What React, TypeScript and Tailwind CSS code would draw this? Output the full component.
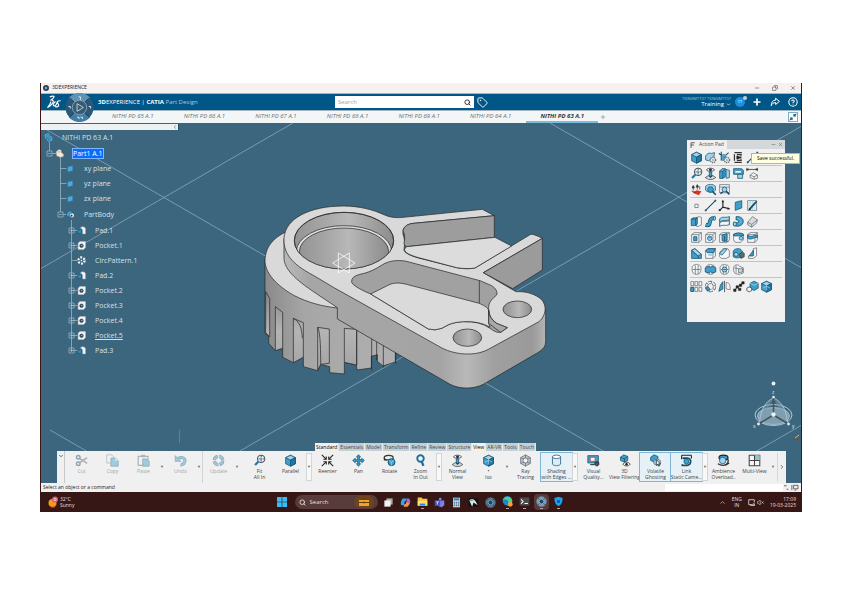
import type { ReactNode } from 'react';
import { ChevronDown, ChevronLeft, ChevronRight, ChevronUp, CircleHelp, Copy, Minus, Plus, Search, Tag, VolumeX, X } from 'lucide-react';
import { clsx } from 'clsx';

const documents = ['65', '66', '67', '68', '69', '64', '63'];

const ribbonTabs = ['Standard', 'Essentials', 'Model', 'Transform', 'Refine', 'Review', 'Structure', 'View', 'AR-VR', 'Tools', 'Touch'];

type Command = {
  label: string[];
  icon: string;
  menu?: 'plain' | 'boxed';
  gap?: boolean;
  disabled?: boolean;
  active?: boolean;
};

const commands: Command[] = [
  { label: ['Cut'], icon: 'cut', disabled: true },
  { label: ['Copy'], icon: 'copy', disabled: true },
  { label: ['Paste'], icon: 'paste', disabled: true, menu: 'plain' },
  { label: ['Undo'], icon: 'undo', disabled: true, menu: 'plain' },
  { label: ['Update'], icon: 'update', disabled: true, menu: 'plain', gap: true },
  { label: ['Fit', 'All In'], icon: 'fit' },
  { label: ['Parallel'], icon: 'cube', menu: 'boxed' },
  { label: ['Reenter'], icon: 'recenter' },
  { label: ['Pan'], icon: 'pan' },
  { label: ['Rotate'], icon: 'rotate' },
  { label: ['Zoom', 'In Out'], icon: 'zoom', menu: 'boxed' },
  { label: ['Normal', 'View'], icon: 'normal' },
  { label: ['•', 'Iso'], icon: 'iso', menu: 'plain' },
  { label: ['Ray', 'Tracing'], icon: 'ray' },
  { label: ['Shading', 'with Edges ...'], icon: 'cylinder', active: true, menu: 'boxed' },
  { label: ['Visual', 'Quality...'], icon: 'quality' },
  { label: ['3D', 'View Filtering'], icon: 'filter' },
  { label: ['Volatile', 'Ghosting'], icon: 'ghost', active: true },
  { label: ['Link', 'Static Came...'], icon: 'link', active: true, menu: 'boxed' },
  { label: ['Ambience', 'Overload..'], icon: 'ambience' },
  { label: ['Multi-View'], icon: 'multi', menu: 'plain' },
];

const padRows = [
  ['cube', 'sheetGear', 'axisGear', 'exit', 'line'],
  ['fit', 'normal', 'section', 'layers', 'measure'],
  ['material', 'zoomBody', 'zoomSheet'],
  ['point', 'line', 'axis', 'plane', 'sketch'],
  ['pad', 'rib', 'loft', 'shaft', 'sheet'],
  ['pocket', 'hole', 'shell', 'groove', 'slot'],
  ['draft', 'thick', 'chamfer', 'fillet', 'stiffener'],
  ['boolAdd', 'boolRemove', 'boolCut', 'boolJoin'],
  ['pattern', 'circPattern', 'mirror', 'points', 'scale', 'iso'],
];

const B = '#3f9fcb';
const L = '#9fd4ec';
const D = '#164e6b';
const G = '#636b70';
const W = '#f4f6f7';

const cubeShape = (
  <>
    <path d="M2 4.5 8 1.5l6 3v7.5l-6 3-6-3z" fill={B} stroke={D} />
    <path d="M2 4.5 8 1.5l6 3-6 3z" fill={L} stroke={D} />
    <path d="M8 7.5V15l6-3V4.500z" fill="#2377a3" stroke={D} />
  </>
);

const box = (
  <>
    <path d="M2 4.500 5 2h9v9l-3 3H2z" fill={W} stroke={G} />
    <path d="M2 4.500h9V14M11 4.500 14 2" stroke={G} />
  </>
);

const gear = (
  <g>
    <circle cx="11" cy="11" r="3.200" fill={W} stroke={G} strokeDasharray="1.500 .8" strokeWidth="1.800" />
    <circle cx="11" cy="11" r="1" fill={G} />
  </g>
);

const lobes = (
  <path d="M5 2.500c2-1 4-1 5.500 0 2 0 3 1.500 3 3.500s0 5-1.500 6.500c-2 2-6 2-8 0C2.500 11 2.500 8 2.500 6S3.500 3 5 2.500zM6.500 3v10.500M10 3v10.500M3 8h10" />
);

const icons: Record<string, ReactNode> = {
  cube: cubeShape,
  iso: (
    <>
      {cubeShape}
      <path d="M8 3v10M3.500 10l4.500-2.500L12.500 10" stroke={L} />
    </>
  ),
  sheetGear: (
    <>
      <path d="M2 6c2-3 4-4 7-3l4-1-1 6-6 4-4-1z" fill={L} stroke={D} />
      {gear}
    </>
  ),
  axisGear: (
    <>
      <path d="M4 1v10h9M4 5h6l3-3M1 3l3 2" stroke={D} strokeWidth="1.300" />
      <path d="M5 6h5v4H5z" fill={B} />
      {gear}
    </>
  ),
  exit: (
    <>
      <path d="M3 2h9M3 14h9M3 4v8M6 4.500h6M6 11.500h6" stroke="#333" strokeWidth="1.500" />
      <path d="M6 6l5 2-5 2zM11 5v6" fill="#222" stroke="#222" />
    </>
  ),
  line: (
    <>
      <path d="M2 14 14 2" stroke={D} strokeWidth="1.400" />
      <path d="M1 13h2v2H1zM13 1h2v2h-2z" fill={D} />
    </>
  ),
  point: <path d="M6 6.500h4v4H6z" fill={W} stroke={G} />,
  fit: (
    <>
      <circle cx="10" cy="6" r="4.600" fill={W} stroke="#39444b" strokeWidth="1.200" />
      <path d="m6.500 9.500-4 4" stroke="#1f7aa8" strokeWidth="2.800" />
      <path d="m10 2.500 1.200 1.500H8.800zM10 9.500 8.800 8h2.400zM6.500 6 8 4.800v2.400zM13.500 6 12 7.200V4.800z" fill="#222" />
      <path d="M8.800 5h2.400v2.200H8.800z" fill={B} />
    </>
  ),
  normal: (
    <>
      <path d="M3 3.500C5.500.8 10.500.8 13 3.500c-2.500 2.600-7.500 2.600-10 0z" fill={W} stroke="#222" />
      <circle cx="8" cy="3.500" r="1.800" fill="#1c2e38" />
      <path d="m1.500 13 4-2.500h5.500l3.500 2.500-4 2.300H5.500z" fill="#cfd8dc" stroke="#444" />
      <path d="M6.500 6h3v5.500h-3z" fill={B} stroke={D} />
      <path d="m5.500 11 2.500 2.500 2.500-2.500z" fill={D} />
    </>
  ),
  section: (
    <>
      <path d="M2 5l3-3h4v10l-3 2H2z" fill={B} stroke={D} />
      <path d="M6 5v9M2 5h4l3-3M10 3l4 1v9l-4 1z" fill={L} stroke={D} />
    </>
  ),
  layers: (
    <>
      <path d="M2 2h10l2 2v5H2z" fill={B} stroke={D} />
      <path d="M4 5h7v2H4z" fill={W} />
      <path d="M7 9h6v5H7z" fill={L} stroke={D} />
    </>
  ),
  measure: (
    <>
      <path d="M1 3h13M1 1v4M14 1v4M3 2 1 3l2 1M12 2l2 1-2 1" stroke="#222" />
      <path d="m5 10 4-3 5 3v4l-4 1-5-2z" fill={W} stroke={G} />
      <path d="m5 10 5 2 4-2M10 12v3" stroke={G} />
    </>
  ),
  material: (
    <>
      <path d="m3 12 5-3 6 1-3 5z" fill="#d93226" />
      <path d="M4 9V4M9 8V3M2.500 6 4 3l1.500 3zM7.500 5 9 2l1.500 3zM2 10l5 1.500M12 4v4" fill="#333" stroke="#333" />
    </>
  ),
  zoomBody: (
    <>
      <path d="M2 4c3-3 9-3 12 0v5c-3 3-9 3-12 0z" fill={L} stroke={D} />
      <circle cx="8" cy="8" r="3.500" fill={B} stroke={D} />
      <path d="m10.500 10.500 4 4" stroke={D} strokeWidth="2" />
    </>
  ),
  zoomSheet: (
    <>
      <path d="M2 2h12v10H2zM2 5h12" fill={W} stroke={G} />
      <circle cx="8" cy="8" r="3" fill={L} stroke={D} />
      <path d="m10 10 4 4M3 13l3-2" stroke={D} strokeWidth="1.800" />
    </>
  ),
  axis: (
    <>
      <path d="M6 10V2M6 10l8 2M6 10l-4 4" stroke="#222" strokeWidth="1.400" />
      <path d="M4.500 4 6 1l1.500 3zM12 10l3 2.300-3.500 1zM1 12l0 3 3-1z" fill="#222" />
    </>
  ),
  plane: <path d="M4 4l8-2v9l-8 3z" fill={B} stroke={D} />,
  treePlane: <path d="M3 5l9-2v9l-9 2z" fill="#4fa9d8" stroke="#2b7aa8" />,
  sketch: (
    <>
      <path d="M2 2h11v12H2z" fill={W} stroke={G} />
      <path d="M2 5h11M2 8h11M2 11h11M5 2v12M8 2v12" stroke={L} />
      <path d="M4 13 13 3" stroke={D} strokeWidth="2.200" />
      <path d="M3 14l3-1-2-2z" fill="#222" />
    </>
  ),
  pad: (
    <>
      <path d="M8 3l4-1 2 1v9l-4 2H8z" fill={W} stroke={G} />
      <path d="M1.500 5 4 3.500h5V11l-2 2H1.500zM1.500 5H7v8M7 5l2-1.500" fill={B} stroke={D} />
    </>
  ),
  rib: (
    <>
      <path d="M2 12c9 3 1-9 11-8" stroke={D} strokeWidth="5" />
      <path d="M2 12c9 3 1-9 11-8" stroke={B} strokeWidth="3.200" />
      <ellipse cx="13" cy="4" rx="1.300" ry="2.500" fill={L} stroke={D} />
    </>
  ),
  loft: (
    <>
      <path d="M2 5c3-4 6-1 12-3v4C9 8 6 5 2 9z" fill={L} stroke={D} />
      <path d="M2 10c4-4 6-1 12-3v5c-5 2-8-1-12 2z" fill={W} stroke={D} />
      <path d="M2 5v9M14 2v10" stroke={G} />
    </>
  ),
  shaft: (
    <>
      <path d="M5 2c11-1 12 11 2 12l-5-1v-4c7 2 8-3 3-3z" fill={B} stroke={D} />
      <ellipse cx="3.500" cy="11" rx="2" ry="2.500" fill={L} stroke={D} />
      <path d="M7 4c5 1 5 5 2 7" stroke={L} />
    </>
  ),
  sheet: (
    <>
      <path d="M2 9l6-7 6 4-1 4-6 5-5-3z" fill="#d8dcde" stroke={G} />
      <path d="m2 9 5 2.500L14 6M7 11.500V15" stroke={G} />
    </>
  ),
  pocket: (
    <>
      {box}
      <path d="M4.500 7h4v5h-4z" fill={B} stroke={D} />
    </>
  ),
  hole: (
    <>
      {box}
      <circle cx="7" cy="9" r="2.700" fill={L} stroke={D} />
      <path d="M5 9c0-3 4-3 4 0" fill={B} />
    </>
  ),
  shell: (
    <>
      {box}
      <path d="M5 5l6-2v8l-3 2-3-1z" fill={B} stroke={D} />
      <path d="M8 6v6l5 1" stroke={D} />
    </>
  ),
  groove: (
    <>
      <path d="M2 4c3-2 9-2 12 0v7l-3 3H4l-2-3z" fill={W} stroke={G} />
      <path d="M2 4c3-2 9-2 12 0v2H2z" fill={B} stroke={D} />
      <circle cx="11" cy="9" r="2.200" fill={L} stroke={D} />
    </>
  ),
  slot: (
    <>
      {box}
      <path d="M2 5c5 4 8-1 12 0v3c-4-1-7 4-12 1z" fill={B} stroke={D} />
    </>
  ),
  draft: (
    <>
      <path d="M2 4l4-2 8 7v5H2z" fill={B} stroke={D} />
      <path d="m2 4 8 7v3" fill="none" stroke={D} />
      <path d="m2 4 4-2 8 7-4 2z" fill={L} stroke={D} />
    </>
  ),
  thick: (
    <>
      {box}
      <path d="M2 4.500 5 2h9l-2 5H4z" fill={B} stroke={D} />
      <path d="M5 8h5v3H5z" fill={L} />
    </>
  ),
  chamfer: (
    <>
      <path d="M2 7l4-5h6l2 3v7l-4 2H4l-2-2z" fill={W} stroke={G} />
      <path d="M2 8 8 2l3 1-6 7z" fill={L} stroke={D} />
    </>
  ),
  fillet: (
    <>
      <path d="M1.500 6c0-3 3-4 6-4s5 2 5 4v5c-3 3-8 3-11 1z" fill={B} stroke={D} />
      <circle cx="5" cy="9" r="2.500" fill={L} stroke={D} />
      <path d="m9 9 4-3 2 2v4l-4 2z" fill={G} stroke="#333" />
    </>
  ),
  stiffener: (
    <>
      <path d="M9 2l4-1v10l-4 3-6 0v-3l6-1z" fill={W} stroke={G} />
      <path d="M9 4v7H4z" fill={B} stroke={D} />
    </>
  ),
  boolAdd: <g stroke={G} fill={W}>{lobes}</g>,
  boolRemove: (
    <>
      <g stroke={G} fill={W}>{lobes}</g>
      <path d="M1.500 6 5 4l3 1 3-1 3.500 2v5L11 12l-3-1-3 1-3.500-1z" fill={B} stroke={D} />
    </>
  ),
  boolCut: (
    <>
      <g stroke={G} fill={W}>{lobes}</g>
      <circle cx="8" cy="8" r="3" fill={L} stroke={D} />
      <path d="M6 8h4" stroke={D} />
    </>
  ),
  boolJoin: (
    <>
      <path d="M2 5c1-3 6-4 7-1l5 2v6l-5 2-5-1-2-3z" fill={W} stroke={G} />
      <path d="M8 7l5 0v4l-5 1zM5 3v9M8 7 3 6" fill="#c9d3d8" stroke={G} />
    </>
  ),
  pattern: (
    <>
      {[1, 6, 11].map((x) => (
        <path key={x} d={`M${x} 2h3.500v5H${x}zM${x} 9h3.500v5H${x}z`} fill={W} stroke={G} />
      ))}
      <path d="M1 9h3.500v5H1z" fill={B} stroke={D} />
    </>
  ),
  circPattern: (
    <>
      <circle cx="8" cy="8" r="5" fill="none" stroke={G} strokeWidth="4" strokeDasharray="3.800 1.400" />
      <circle cx="8" cy="8" r="5" fill="none" stroke={W} strokeWidth="2" strokeDasharray="3 2.200" />
      <path d="M2 9l3-1 2 3-2 3z" fill={B} stroke={D} />
    </>
  ),
  mirror: (
    <>
      <path d="M8 1v14" stroke="#333" />
      <path d="M6 2v9l-5 3 2-8z" fill={B} stroke={D} />
      <path d="M10 3c4 0 5 3 5 9l-5-1z" fill={W} stroke={G} />
    </>
  ),
  points: (
    <path d="M2 11h3v3H2zM5 7h3v3H5zM8 10h3v3H8zM9 5h3v3H9zM12 2h3v3h-3zM3 12 14 3" fill="#222" stroke="#222" strokeWidth=".6" />
  ),
  scale: (
    <>
      <path d="M5 4l5-2.500L15 4v6l-5 3-5-3z" fill={B} stroke={D} />
      <path d="m5 4 5 2.500L15 4" stroke={L} />
      <path d="m1 10 3-1.500L7 10v3l-3 1.500L1 13z" fill={W} stroke="#333" />
    </>
  ),
  cut: (
    <>
      <circle cx="4" cy="4" r="2.200" fill="none" stroke={D} strokeWidth="1.800" />
      <circle cx="4" cy="12" r="2.200" fill="none" stroke={D} strokeWidth="1.800" />
      <path d="m6 5.500 9 6M6 10.500l9-6" stroke={G} strokeWidth="2" />
    </>
  ),
  copy: (
    <>
      <path d="M1 1h6l2 2v8H1z" fill={W} stroke={G} />
      <path d="M6 5h5.500L15 8v7H6z" fill={B} stroke={D} />
      <path d="M11.500 5v3H15z" fill={W} />
    </>
  ),
  paste: (
    <>
      <path d="M1.500 3h12v11h-12z" fill={W} stroke={G} strokeWidth="1.500" />
      <path d="M5 1h5v3H5z" fill={G} />
      <path d="M7 6h4.500L15 9v6H7z" fill={B} stroke={D} />
    </>
  ),
  undo: (
    <>
      <path d="M4 6c6-4 11 0 9 4-1 2.500-3 3.500-5 3.500" fill="none" stroke={D} strokeWidth="3.600" />
      <path d="M4 6c6-4 11 0 9 4-1 2.500-3 3.500-5 3.500" fill="none" stroke={B} strokeWidth="2" />
      <path d="M1.500 2v7h7z" fill={B} stroke={D} />
    </>
  ),
  update: (
    <>
      <circle cx="8" cy="8" r="5.200" fill="none" stroke={D} strokeWidth="4" strokeDasharray="6.500 1.670" />
      <circle cx="8" cy="8" r="5.200" fill="none" stroke={B} strokeWidth="2.400" strokeDasharray="5.500 2.670" />
    </>
  ),
  recenter: (
    <>
      <path d="m1 1 5 5M15 1l-5 5M1 15l5-5M15 15l-5-5" stroke="#222" strokeWidth="1.300" />
      <path d="M6.500 3v3.500H3M9.500 3v3.500H13M6.500 13V9.500H3M9.500 13V9.500H13" fill="none" stroke="#222" strokeWidth="1.300" />
    </>
  ),
  pan: (
    <path d="m8 .8 2.500 3H9v3h3V5.300L15.200 8 12 10.700V9H9v3h1.500L8 15.200 5.500 12H7V9H4v1.700L.8 8 4 5.300V7h3V3.800H5.500z" fill={B} stroke={D} />
  ),
  rotate: (
    <>
      <ellipse cx="7" cy="4.500" rx="5.500" ry="2.800" fill="none" stroke="#333" strokeWidth="1.500" />
      <path d="M1 4l4 4H1z" fill="#333" />
      <circle cx="10.500" cy="10" r="4.300" fill={B} stroke={D} strokeWidth="1.200" />
      <path d="m7 8 3.500 2 3.500-2M10.500 10v4" stroke={L} />
    </>
  ),
  zoom: (
    <>
      <circle cx="8" cy="5.500" r="4" fill={W} stroke="#1f6f9e" strokeWidth="2.400" />
      <path d="m9.500 9 2 5.500" stroke="#1f6f9e" strokeWidth="2.800" />
    </>
  ),
  ray: (
    <>
      <path d="m8 1 6 3.500v7L8 15l-6-3.500v-7z" fill="#bcc5c9" stroke={G} />
      <circle cx="8" cy="8" r="3" fill={W} stroke={G} />
      <path d="M2 4.500 6 6M14 4.500 10 6M8 11v4M8 1v4M2 11.500 6 10M14 11.500 10 10" stroke={G} />
    </>
  ),
  cylinder: (
    <>
      <path d="M3 3.500v9c2 2.500 8 2.500 10 0v-9z" fill="#d8edf6" stroke={D} />
      <ellipse cx="8" cy="3.500" rx="5" ry="2.200" fill="#fff" stroke={D} />
    </>
  ),
  quality: (
    <>
      <path d="M1 2h13v9H1z" fill={B} stroke={D} />
      <path d="M4 4h6v5H4z" fill={W} stroke="#c33" />
      <path d="M4 13h5" stroke={D} strokeWidth="1.500" />
      <circle cx="12" cy="12" r="2.500" fill="#555" stroke="#222" strokeWidth="1.500" strokeDasharray="1.200 .6" />
    </>
  ),
  filter: (
    <>
      <path d="m3 4 4-3 5 2v5l-4 2-5-2z" fill={B} stroke={D} />
      <path d="m3 4 5 2 4-3M8 6v4" stroke={D} />
      <path d="M6 12.500c2-3 7-3 9 0-2 3-7 3-9 0z" fill={W} stroke="#222" />
      <circle cx="10.500" cy="12.500" r="1.500" fill="#222" />
    </>
  ),
  ghost: (
    <>
      <path d="m2 4 4-3 5 2v5l-4 2-5-2z" fill={B} stroke={D} />
      <path d="m6 8 4-2 4 2v5l-4 1-4-2z" fill={L} stroke={G} />
      <path d="m9 7 0 7 2-1.500 1 2.500 1-.5-1-2.500h2z" fill={W} stroke="#222" />
    </>
  ),
  link: (
    <>
      <path d="M2 1.500h12M2 1.500v5M14 1.500v4" stroke="#222" strokeWidth="1.300" />
      <path d="M3 5h6c6 1 5 8 0 9H4" fill="none" stroke={D} strokeWidth="2" />
      <path d="m5 7 3-1 3 1.500V11l-3 1.500L5 11z" fill={B} stroke={D} />
      <path d="M2 12l3 2-3 1.500z" fill="#222" />
    </>
  ),
  ambience: (
    <>
      <ellipse cx="8" cy="4.500" rx="5.500" ry="3" fill={B} stroke="#222" strokeWidth="1.500" />
      <circle cx="7" cy="8" r="4" fill={L} stroke={D} />
      <path d="M1 12c5 3 9 3 14-1M13 6c2 3 0 7-5 8" fill="none" stroke="#333" strokeWidth="1.600" />
    </>
  ),
  multi: (
    <>
      <path d="M1.500 1.500h13v13h-13z" fill={W} stroke="#444" strokeWidth="1.300" />
      <path d="M8 1.500h6.500V8H8z" fill="#8fc6cf" />
      <path d="M8 1.500v13M1.500 8h13" stroke="#444" strokeWidth="1.300" />
    </>
  ),
  treePad: (
    <>
      <path d="M6 4c2-4 9-3 9 1v9h-5V7z" fill={W} stroke="#aab" />
      <path d="M1 9l7-4v8H1z" fill="#2b8fc4" stroke={D} />
    </>
  ),
  treePocket: (
    <>
      <path d="M2 4 5 1h10v10l-3 4H2z" fill={W} stroke="#bbb" />
      <circle cx="8" cy="8.500" r="3.200" fill="#35566a" stroke="#223" />
      <path d="M7 9c0-2 3-2 3 0z" fill="#cfdde5" />
    </>
  ),
  treeCirc: (
    <>
      <circle cx="8" cy="8" r="5.500" fill="none" stroke={W} strokeWidth="4" strokeDasharray="3.400 2.360" />
      <circle cx="8" cy="8" r="1.500" fill={W} />
    </>
  ),
  treePart: (
    <>
      <path d="M2 5l5-4 4 1v4l4 3v4l-5 2-7-3z" fill="#f0e6da" stroke="#b8a898" />
      <circle cx="7" cy="5" r="1.500" fill="#c9a88f" />
    </>
  ),
  treeBody: (
    <>
      <path d="m1 5 6-4 4 2v6l-5 4-5-3z" fill={B} stroke={D} />
      <path d="m6 8 5-3 4 3-1 5-5 1z" fill="#dfe9ee" stroke={D} />
      <circle cx="10" cy="10" r="1.500" fill="#222" />
    </>
  ),
  treeRoot: (
    <>
      <path d="m2 3 6-2 2 5 4 1v6l-6 2-3-4-2-2z" fill="#2786b5" stroke={L} />
      <path d="M5 4l3 4M9 9l3 3" stroke={L} />
    </>
  ),
};

function Icon({ name, className = 'size-3' }: { name: string; className?: string }) {
  return (
    <svg viewBox="0 0 16 16" fill="none" strokeWidth="0.900" className={clsx('shrink-0', className)} aria-hidden="true">
      {icons[name]}
    </svg>
  );
}

function Scene() {
  return (
    <svg viewBox="41 123 760 360" preserveAspectRatio="xMidYMid slice" className="absolute inset-0 h-full w-full" aria-hidden="true">
      <defs>
        <linearGradient id="wall" x1="0" x2="1">
          <stop offset="0" stopColor="#949494" />
          <stop offset=".3" stopColor="#a6a6a6" />
          <stop offset=".55" stopColor="#b8b8b8" />
          <stop offset="1" stopColor="#8c8c8c" />
        </linearGradient>
        <linearGradient id="side" gradientUnits="userSpaceOnUse" x1="100" y1="0" x2="887" y2="0">
          <stop offset="0" stopColor="#bababa" />
          <stop offset=".1" stopColor="#a6a6a6" />
          <stop offset=".6" stopColor="#a4a4a4" />
          <stop offset=".7" stopColor="#b9b9b9" />
          <stop offset=".8" stopColor="#a0a0a0" />
          <stop offset=".95" stopColor="#9a9a9a" />
          <stop offset="1" stopColor="#b5b5b5" />
        </linearGradient>
        <linearGradient id="disc" gradientUnits="userSpaceOnUse" x1="45" y1="0" x2="437" y2="0">
          <stop offset="0" stopColor="#8a8a8a" />
          <stop offset=".3" stopColor="#a6a6a6" />
          <stop offset="1" stopColor="#b0b0b0" />
        </linearGradient>
        <linearGradient id="slotShade" x1="0" y1="0" x2="0" y2="1">
          <stop offset="0" stopColor="#858585" />
          <stop offset=".5" stopColor="#b4b4b4" />
          <stop offset="1" stopColor="#a4a4a4" />
        </linearGradient>
        <clipPath id="bore">
          <ellipse cx="282" cy="137" rx="149" ry="85" />
        </clipPath>
      </defs>

      {/* reference planes */}
      <g stroke="#86a9bd" strokeWidth="0.800" fill="none">
        <path d="M41 126.500 610 455M41 268.500 293 123M240 451 807 123M550 123 807 271M50 430l38 22M750 455l57-33" />
        <path d="M179.500 430v13" stroke="#6f8894" />
      </g>

      {/* bracket */}
      <g transform="translate(250 195) scale(.33333)" stroke="#2a2a2a" strokeWidth="2.200" strokeLinejoin="round">
        <path
          d="M45 195V415l11 8v22l20 22 22-7v27l32 16 30-17v29l43 12 9-19 27 7v18l44 4v-35l36 8 2 15 43-6v-35l18-5v20l17 14 37-12v-60L262 330z"
          fill="url(#disc)"
        />
        {/* gear slots */}
        <path d="M47 290l12 20v115l-12-12zM76 335l22 17v108l-22 7zM130 370l30 13v104l-30 16zM203 397l35 5v103l-26 3-9 19zM283 400l37 3v107l-37-8z" fill="url(#slotShade)" />
        <path d="M130 370c22 12 25 32 27 60M203 397c9 16 9 80 9 110M365 430v97M380 440v55M400 450v67M320 403v107M437 470v36" fill="none" />
        <path d="M105 112C60 135 45 165 45 200c3 42 45 78 90 103 38 19 80 31 127 36l60-39-160-130z" fill="#d9d9d9" />
        <path d="M102 130v60c2 50 75 90 160 148v34l338 196c30 15 70 15 100 0l160-93c20-12 27-20 27-38V345L500 200z" fill="url(#side)" />
        <path
          d="M102 130C105 70 180 33 280 33c50 0 90 12 122 26 20 9 38 10 58 8l237-24 36 19-243 23c-25 4-33 15-31 32 8 25 4 35 3 47 0 8 16 17 40 24l118 30c25 5 40 3 55 1l167-101q8-2 35 12L700 233l98 57c35-2 60 10 75 22 18 18 17 48-6 68L715 463c-40 22-105 18-150-10L250 277l-60-36C125 207 100 175 102 130z"
          fill="#d9d9d9"
        />
        <path d="M490 85 733 62v65l-263 28q-10-5-8-12c6-20-2-30-3-38q6-18 31-20z" fill="#9d9d9d" />
        <path d="m470 155 265-28 50 26-110 66c-15 3-35 2-55-1l-118-31c-25-8-50-18-32-32z" fill="#dcdcdc" />
        <path d="m700 233 177-103v95l-89 56z" fill="#9b9b9b" />
        <ellipse cx="282" cy="137" rx="149" ry="85" fill="url(#wall)" />
        <g clipPath="url(#bore)">
          <ellipse cx="282" cy="170" rx="143" ry="78" fill="#dedede" />
          <ellipse cx="282" cy="170" rx="134" ry="71" fill="url(#wall)" />
        </g>
        <ellipse cx="282" cy="137" rx="149" ry="85" fill="none" />
        <path
          d="M305 262q-2-18 25-24c40-8 55-23 75-33q25-12 60-7l225 59 35 15q20 13 15 28c-24 20-25 30-24 45q2 25 24 40l32 13-20 14q-12 3-32-12-30-22-80-20c-40 3-45 10-65 20q-20 8-40 2L362 297q-52-22-57-35z"
          fill="#a1a1a1"
        />
        <path d="m362 297 58-29q20-8 50 0l218 57q28 12 28 22v38l4 12q-30-19-80-17c-40 3-45 10-65 20q-20 8-40 2z" fill="#dadada" />
        <path d="M716 345v40l36 27 20-14-32-13q-24-15-24-40z" fill="#a8a8a8" />
        <path d="M688 257v68" />
        <ellipse cx="802" cy="343" rx="43" ry="25" fill="url(#wall)" />
        <ellipse cx="652" cy="428" rx="43" ry="26" fill="url(#wall)" />
        <path d="M248 204l50-30v60zM315 204l-50-30v60z" stroke="#fff" fill="none" />
      </g>

      {/* orientation compass */}
      <g fill="none" stroke="#b4cbd8" strokeWidth="0.800">
        <ellipse cx="773.500" cy="415" rx="18.500" ry="10.500" stroke="#d5e2ea" />
        <ellipse cx="773.500" cy="416" rx="16" ry="8.500" fill="#7f9eb0" />
        <path d="M773.500 398c-8 3-13 12-14 25M773.500 398c8 3 13 12 14 25M773.500 398v17" fill="#7f9eb0" fillOpacity=".5" />
        <path d="M773.500 415l-15 9M773.500 415l15 9M773.500 397v18" stroke="#43545e" strokeWidth="1.600" />
        <g fill="#e8f1f5" stroke="none">
          <circle cx="773.500" cy="414.500" r="2.200" />
          <circle cx="758.500" cy="424" r="1.400" />
          <circle cx="788.500" cy="424" r="1.400" />
          <circle cx="773.500" cy="397" r="1.300" />
          <circle cx="773.500" cy="383.500" r="1.900" />
        </g>
        <g fill="#e8f1f5" stroke="none" fontFamily="Open Sans, sans-serif" fontSize="5">
          <text x="772" y="394">z</text>
          <text x="753" y="428">x</text>
          <text x="792" y="428">y</text>
        </g>
        <path d="m795 440 5-4" stroke="#5c5a4c" strokeWidth="3" />
        <path d="m795 438 4-3" stroke="#d8d8c8" />
      </g>
    </svg>
  );
}

function TreeRow({ icon, label, indent, selected, underline }: { icon: string; label: string; indent: string; selected?: boolean; underline?: boolean }) {
  return (
    <li className={clsx('flex h-[15px] items-center', indent)}>
      <Icon name={icon} className="size-[9px]" />
      <button className={clsx('ml-[9px] leading-[9px] text-[#d3e2ea]', selected && 'bg-[#0a6cff] text-white outline outline-[#7fb4ff]', underline && 'underline')}>
        {label}
      </button>
    </li>
  );
}

const features = ['Pad.1', 'Pocket.1', 'CircPattern.1', 'Pad.2', 'Pocket.2', 'Pocket.3', 'Pocket.4', 'Pocket.5', 'Pad.3'];

function featureIcon(name: string) {
  if (name.startsWith('Pad')) return 'treePad';
  if (name.startsWith('Circ')) return 'treeCirc';
  return 'treePocket';
}

function Tree() {
  return (
    <nav aria-label="Specification tree" className="relative text-[7px]">
      <svg viewBox="0 0 60 232" className="absolute left-0 top-0 h-[232px] w-[60px]" fill="none" stroke="#a3bfcd" strokeWidth="0.700">
        <path d="M8.500 12v9M11 23.500h4M19.500 28v54M19.500 38.500h6M19.500 53.500h6M19.500 68.500h6M22 84.500h4M30.500 90v130.500" />
        {features.map((f, i) => (
          <path key={f} d={`M30.500 ${100.5 + i * 15}h6`} />
        ))}
        <path d="M6 21h5v5H6zM7 23.500h3M17 82h5v5h-5zM18 84.500h3" />
        {features.map((f, i) =>
          f.startsWith('Circ') ? null : <path key={f} d={`M28 ${98 + i * 15}h5v5h-5zM29 ${100.5 + i * 15}h3M30.500 ${99 + i * 15}v3`} />
        )}
      </svg>
      <ul className="relative flex flex-col gap-px">
        <TreeRow icon="treeRoot" label="NITHI PD 63 A.1" indent="pl-[3px]" />
        <li>
          <ul>
            <TreeRow icon="treePart" label="Part1 A.1" indent="pl-[14px]" selected />
            {['xy plane', 'yz plane', 'zx plane'].map((p) => (
              <TreeRow key={p} icon="treePlane" label={p} indent="pl-[25px]" />
            ))}
          </ul>
        </li>
        <TreeRow icon="treeBody" label="PartBody" indent="pl-[25px]" />
        <li>
          <ul>
            {features.map((f) => (
              <TreeRow key={f} icon={featureIcon(f)} label={f} indent="pl-[36px]" underline={f === 'Pocket.5'} />
            ))}
          </ul>
        </li>
      </ul>
    </nav>
  );
}

function ActionPad() {
  return (
    <section className="relative mr-4 mt-[17px] h-[182px] w-[98px] bg-[#f0f0f0] text-[5px] text-[#444]">
      <header className="flex h-[9px] items-center bg-[#d4d8da]">
        <h2 className="flex h-full items-center gap-1 bg-[#f0f0f0] px-[3px]">
          <svg viewBox="0 0 6 8" className="h-[6px] w-[5px]" fill="none" stroke="#333"><path d="M1 8V1h5M1 4h4" /></svg>
          Action Pad
        </h2>
        <button aria-label="Minimize" className="ml-auto"><Minus className="size-[5px]" /></button>
        <button aria-label="Close" className="mx-[2px]"><X className="size-[5px]" /></button>
      </header>
      <div className="px-[3px] pt-[1px]">
        {padRows.map((row, i) => (
          <div key={i} className={clsx('flex h-4 items-center gap-px', i < 8 && 'border-b border-[#c2c5c7]')}>
            {row.map((name) => (
              <button key={name} aria-label={name}><Icon name={name} className="size-[13px]" /></button>
            ))}
          </div>
        ))}
      </div>
      <p role="status" className="absolute left-16 top-[13px] whitespace-nowrap border border-[#b5b59a] bg-[#ffffe1] px-[5px] leading-[9px] text-black">
        Save successful.
      </p>
    </section>
  );
}

function Toolbar() {
  return (
    <div className="relative ml-4 mr-[15px] text-[5px] text-[#3c4449]">
      <div role="tablist" className="ml-[258px] flex h-2 w-[221px] justify-between bg-[#c5cfd3]">
        {ribbonTabs.map((t) => (
          <button
            key={t}
            role="tab"
            className={clsx('grow border-r border-[#e3e8ea] px-px leading-[8px]', t === 'Standard' || t === 'View' ? 'bg-[#f0f0f0] text-black' : '')}
          >
            {t}
          </button>
        ))}
      </div>
      <div className="flex h-8 bg-[#f0f0f0]">
        <button aria-label="Collapse" className="mr-px flex w-2 items-start justify-center border-r border-[#c4c8ca] pt-[2px]">
          <ChevronDown className="size-[6px]" strokeWidth={3} />
        </button>
        {commands.map((c) => (
          <div key={c.icon} className={clsx('flex shrink-0 py-[2px]', c.gap && 'mr-1', c.icon === 'undo' && 'border-r border-[#d2d5d6]')}>
            <button
              disabled={c.disabled}
              className={clsx(
                'flex w-[31px] flex-col items-center whitespace-nowrap pt-px leading-[6px]',
                c.disabled && 'opacity-45',
                c.active && 'overflow-hidden bg-[#e6f1f7] outline outline-[#7fb6d6]'
              )}
            >
              <Icon name={c.icon} className="size-[13px]" />
              <span className="mt-px flex flex-col items-center">
                {c.label.map((l) => (
                  <span key={l}>{l}</span>
                ))}
              </span>
            </button>
            {c.menu && (
              <button
                aria-label="More"
                className={clsx('flex w-[6px] items-center justify-center text-[4px] text-[#666]', c.menu === 'boxed' && 'border border-[#d3d6d7] bg-[#f8f8f8]')}
              >
                ▼
              </button>
            )}
          </div>
        ))}
        <button aria-label="Scroll" className="mx-auto my-[2px] flex items-center border-l border-[#d3d6d7] pl-px">
          <ChevronRight className="size-[6px]" strokeWidth={3} />
        </button>
      </div>
    </div>
  );
}

function Header() {
  return (
    <header className="relative">
      <div className="flex h-[10px] items-center gap-[3px] bg-[#f6f1ee] px-[2px] text-[5px] text-[#222]">
        <svg viewBox="0 0 8 8" className="size-[6px]"><circle cx="4" cy="4" r="4" fill="#20445f" /><path d="M3 2l3 2-3 2z" fill="#a9cde2" /></svg>
        3DEXPERIENCE
        <div className="ml-auto mr-[3px] flex gap-3 text-[#333]">
          <button aria-label="Minimize"><Minus className="size-[6px]" /></button>
          <button aria-label="Restore"><Copy className="size-[6px] -scale-x-100" /></button>
          <button aria-label="Close"><X className="size-[6px]" /></button>
        </div>
      </div>
      <div className="flex h-[17px] items-center border-t border-[#8fbcd6] bg-[#005686] text-white">
        <svg viewBox="0 0 36 36" className="ml-[6px] size-[14px]" fill="none" stroke="#fff" strokeWidth="3" strokeLinejoin="round">
          <path d="M7 5c5-3 12-3 11 0-1 4-5 6-8 8 5-1 8 2 5 7S6 31 2 32c4-5 7-9 8-15" />
          <path d="M22 17c-5 2-8 10-4 11s7-5 9-12M35 15c-5-1-9 1-8 5s4 4 3 7-5 4-9 3" />
        </svg>
        <p className="ml-[37px] whitespace-nowrap text-[6px]">
          <b>3D</b>EXPERIENCE | <b>CATIA</b> <span className="text-[#a9cbe0]">Part Design</span>
        </p>
        <label className="absolute left-[294px] flex h-3 w-[139px] items-center bg-white px-[3px] text-[#222]">
          <input aria-label="Search" placeholder="Search" className="min-w-0 flex-1 text-[6px] outline-none placeholder:text-[#a5a5a5]" />
          <Search className="size-[7px]" strokeWidth={3} />
        </label>
        <button aria-label="Tags" className="absolute left-[436px]"><Tag className="size-[11px]" /></button>
        <div className="ml-auto flex items-center gap-2 pr-[3px]">
          <button className="-mr-1 text-right leading-[7px]">
            <span className="block text-[4px] leading-[5px] text-[#9fc4da]">TSINGMTT07 TSINGMTT07</span>
            <span className="flex items-center justify-end gap-[2px] text-[6px]">Training <ChevronDown className="size-[5px]" strokeWidth={3} /></span>
          </button>
          <span className="relative -mr-px flex size-[10px] items-center justify-center rounded-full bg-[#1a8fe0] text-[4px]">
            TT
            <i className="absolute -right-[2px] -top-px size-1 rounded-full bg-[#c9cdd0]" />
          </span>
          <button aria-label="Add"><Plus className="size-[10px]" strokeWidth={4} /></button>
          <button aria-label="Share">
            <svg viewBox="0 0 16 16" className="size-[10px]" fill="none" stroke="#fff" strokeWidth="1.600"><path d="M9 2l6 5-6 5V9C5 9 3 11 2 14 2 8 5 5 9 5z" /></svg>
          </button>
          <button aria-label="Help"><CircleHelp className="size-[10px]" strokeWidth={2.5} /></button>
        </div>
      </div>
      <div className="flex h-[13px] items-center border-t border-[#9fb4be] bg-[#f3f6f6] text-[6px] italic text-[#6a6f72]">
        <div role="tablist" className="ml-14 flex h-full w-[501px]">
          {documents.map((n) => (
            <button key={n} role="tab" className={clsx('flex-1 border-b-2 italic', n === '63' ? 'border-[#7fbcdc] font-bold text-[#333]' : 'border-transparent')}>
              NITHI PD {n} A.1
            </button>
          ))}
        </div>
        <button aria-label="New tab" className="ml-[2px]"><Plus className="size-[6px]" /></button>
        <button aria-label="Exit full screen" className="ml-auto mr-[3px] border border-[#7fb0cb] bg-white">
          <svg viewBox="0 0 10 10" className="size-2" fill="#0b4f78"><path d="M5.500 4.500V1l1 1L9 .5l.5.5L8 3.500l1 1zM4.500 5.500V9l-1-1L1 9.500.5 9 2 6.500l-1-1z" /></svg>
        </button>
      </div>
      {/* compass */}
      <svg viewBox="0 0 30 30" className="absolute left-6 top-[10px] size-[29px]" aria-hidden="true">
        <circle cx="15" cy="15" r="14.500" fill="#2a5878" />
        <path d="M4 5a14.500 14.500 0 0 1 22 0l-6 5a7 7 0 0 0-10 0z" fill="#5f93b5" />
        <path d="M4 25a14.500 14.500 0 0 0 22 0l-6-5a7 7 0 0 1-10 0z" fill="#3f7da6" />
        <path d="M5 5l20 20M25 5 5 25" stroke="#1d3d55" />
        <circle cx="15" cy="15" r="7.500" fill="#3a5b74" stroke="#8fb3c9" strokeWidth=".8" />
        <path d="m12.500 11 6.500 4-6.500 4z" fill="none" stroke="#c9dbe6" strokeWidth=".9" />
        <path d="M14 4l2 0 0 3M3.500 14h2v2M24.500 14h2v2M12.500 25h2v2M16 25h2v2" fill="none" stroke="#dceaf2" />
      </svg>
    </header>
  );
}

const apps: { name: string; art: ReactNode; open?: boolean; focus?: boolean }[] = [
  { name: 'Task view', art: <><path d="M5 2h9v9H5z" fill="#aaa" /><path d="M2 5h9v9H2z" fill="#f2f2f2" /></> },
  { name: 'Copilot', art: <><path d="M4 2h6l-4 10H2C0 9 2 4 4 2z" fill="#36a6ea" /><path d="M10 2h3c3 3 2 6 1 8H9z" fill="#b45ee0" /><path d="M6 12l3-6 5 4-3 4H5z" fill="#f4973a" /><path d="M7 6h3l-2 4H6z" fill="#3a1816" /></> },
  { name: 'Files', open: true, art: <><path d="M1 2h6l1 2h7v10H1z" fill="#f7c544" /><path d="M1 7h14v7H1z" fill="#ffdf7a" /><path d="M4 11h8v3H4z" fill="#2c8be0" /></> },
  { name: 'Teams', art: <><path d="M6 5h9v7l-4 3-5-2z" fill="#7b83eb" /><circle cx="9" cy="3" r="2" fill="#7b83eb" /><path d="M1 5h8v8H1z" fill="#4b53bc" /><path d="M3 7h4M5 7v4" stroke="#fff" /></> },
  { name: 'Calculator', art: <><path d="M3 1h10v14H3z" fill="#cfe3f2" /><path d="M4 2h8v3H4z" fill="#2b7cc0" /><path d="M5 7v7M8 7v7M11 7v7" stroke="#31566f" strokeDasharray="1.500 1" strokeWidth="2" /></> },
  { name: 'Media', art: <><path d="M1 2h14v12H1z" fill="#111" /><path d="M2 5c5-5 9 0 12 7L8 8l-2 6z" fill="#e5e5e5" /><path d="M2 5c3-3 5-2 6 0L5 6z" fill="#4eb5a4" /></> },
  { name: 'Launcher', art: <><circle cx="8" cy="8" r="7.500" fill="#4d7590" /><path d="M3 3l10 10M13 3 3 13" stroke="#1f3a4e" /><circle cx="8" cy="8" r="3.500" fill="#27445a" stroke="#9db9ca" /></> },
  { name: 'Edge', open: true, art: <><circle cx="8" cy="7" r="7" fill="#1b86d6" /><path d="M1 7c1-8 13-8 14 0 0 3-4 4-6 2 1-4-6-5-8-2z" fill="#4fd08c" /><circle cx="12" cy="12" r="3.500" fill="#f1a33a" /></> },
  { name: 'Terminal', open: true, art: <><path d="M1 2h14v12H1z" fill="#4b4b4b" /><path d="m3 5 3 3-3 3M8 11h5" fill="none" stroke="#fff" strokeWidth="1.500" /></> },
  { name: '3DEXPERIENCE', open: true, focus: true, art: <><circle cx="8" cy="8" r="7.500" fill="#6f9ab5" /><path d="M3 3l10 10M13 3 3 13" stroke="#1f3a4e" /><circle cx="8" cy="8" r="3.500" fill="#27445a" stroke="#b5cfdf" /></> },
  { name: 'Security', open: true, art: <><path d="M2 3l6-2 6 2c0 6-2 10-6 12C4 13 2 9 2 3z" fill="#1ea2ee" /><path d="M6 6h4v4H6z" fill="#0b5aa0" /></> },
];

function Taskbar() {
  return (
    <footer className="relative flex h-5 items-center bg-[#371716] text-[5px] text-[#e9dddb]">
      <div className="flex flex-1 items-center gap-px pl-2 leading-[6px]">
        <svg viewBox="0 0 22 24" className="h-3 w-[11px]">
          <circle cx="9" cy="14" r="8" fill="#f39a1f" />
          <path d="M3 18c5 5 12 3 14-4-1 12-12 12-14 4z" fill="#e05d1a" />
          <circle cx="14" cy="7" r="6" fill="#d9577b" />
          <path d="M12 5h4v4h-4z" fill="none" stroke="#fff" />
        </svg>
        <p>32°C<br />Sunny</p>
      </div>
      <div className="flex items-center">
        <button aria-label="Start" className="mr-2">
          <svg viewBox="0 0 10 10" className="size-[10px]" fill="#35bdf5"><path d="M0 0h4.700v4.700H0zM5.300 0H10v4.700H5.300zM0 5.300h4.700V10H0zM5.300 5.300H10V10H5.300z" /></svg>
        </button>
        <button className="mr-[3px] flex h-[14px] w-[83px] items-center gap-1 rounded-full bg-[#573c3b] px-1 text-[6px]">
          <Search className="size-[7px]" strokeWidth={3} />
          Search
          <svg viewBox="0 0 20 12" className="ml-auto h-3 w-5">
            <rect width="20" height="12" rx="6" fill="#6b4420" />
            <path d="M5 4h10v6H5z" fill="#f0a52a" />
            <path d="M8 4V2.500h4V4M5 6.500h10M10 5.500v2" fill="none" stroke="#6a3d0b" />
          </svg>
        </button>
        {apps.map((a) => (
          <button
            key={a.name}
            aria-label={a.name}
            className={clsx('mr-[2px] flex h-4 w-[15px] flex-col items-center justify-center rounded-sm', a.focus && 'bg-[#563a39]')}
          >
            <svg viewBox="0 0 16 16" className="size-[11px]">{a.art}</svg>
            {a.open && <i className="mt-px h-px w-[3px] bg-[#b9a4a2]" />}
          </button>
        ))}
      </div>
      <div className="flex flex-1 items-center justify-end gap-[6px] pr-[6px] leading-[6px]">
        <ChevronUp className="size-[7px]" />
        <p className="text-center">ENG<br />IN</p>
        <span className="flex gap-[2px]">
          <svg viewBox="0 0 10 10" className="size-[7px]" fill="none" stroke="#fff"><path d="M6 8H1V1h8v4M3 9.500h4M7 7h2.500v2.500H7z" /></svg>
          <VolumeX className="size-[7px]" />
        </span>
        <p className="text-right">17:09<br />19-03-2025</p>
      </div>
    </footer>
  );
}

export default function App() {
  return (
    <div className="h-screen bg-white px-10 py-[83px] font-['Open_Sans',sans-serif]">
      <div className="flex h-full flex-col overflow-hidden">
        <div className="flex min-h-0 flex-1 flex-col border-x border-[#3c1717]">
          <Header />
          <main className="relative flex min-h-0 flex-1 flex-col justify-between overflow-hidden bg-[#3c657e]">
            <Scene />
            <div className="relative flex items-start justify-between">
              <div>
                <div className="mt-px flex h-[6px] w-[138px] items-center justify-end border-r border-[#22506a] bg-[#eef1f2] text-[#444]">
                  <button aria-label="Hide tree"><ChevronLeft className="size-[6px]" /></button>
                </div>
                <Tree />
              </div>
              <ActionPad />
            </div>
            <Toolbar />
          </main>
          <div className="flex h-[9px] items-center bg-[#f0f0f0] px-[2px] text-[5px] text-[#222]">
            <label htmlFor="command">Select an object or a command</label>
            <input id="command" className="ml-auto h-[7px] w-[118px] bg-white outline-none" />
            <svg viewBox="0 0 18 8" className="h-[7px] w-4" fill="none" stroke="#555"><path d="M1 2h3M4 6h2M10 1v6M12 1.500h5v4h-5zM13 7h2" /></svg>
          </div>
        </div>
        <Taskbar />
      </div>
    </div>
  );
}
